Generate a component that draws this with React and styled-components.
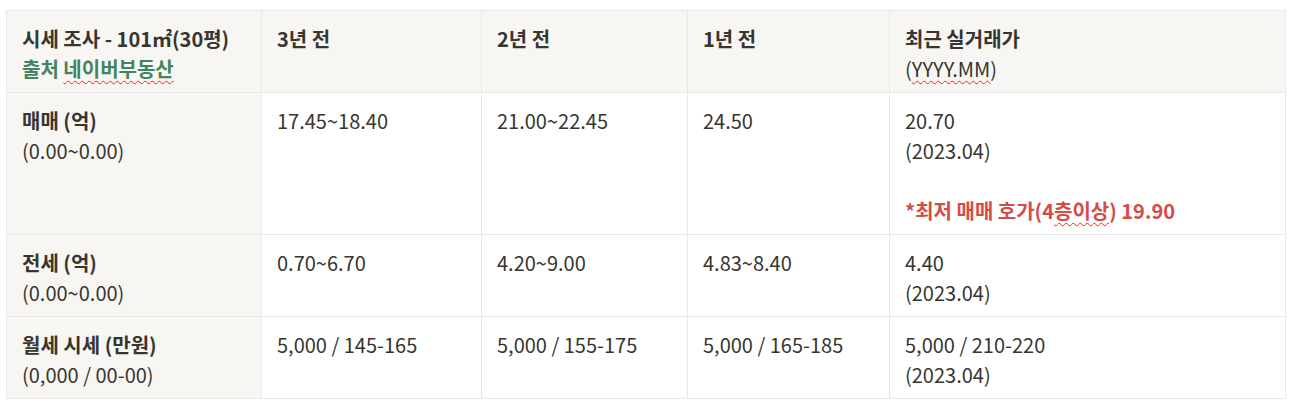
import React from "react";
import styled, { createGlobalStyle } from "styled-components";

const Global = createGlobalStyle`
  html, body { margin: 0; padding: 0; background: #ffffff; }
  body { font-family: "Noto Sans CJK KR", "Noto Sans", sans-serif; color: #37352f; }
`;

const Page = styled.div`
  padding: 10px 8px 0 6px;
`;

const Table = styled.table`
  border-collapse: collapse;
  table-layout: fixed;
  width: 1279px;
  font-size: 20px;
  line-height: 30px;
`;

const Cell = styled.td`
  border: 1px solid #e9e9e7;
  padding: 13px 16px 8px 15px;
  vertical-align: top;
  text-align: left;
  background: ${(p) => (p.$shaded ? "#f7f6f3" : "#ffffff")};
  font-weight: ${(p) => (p.$bold ? 700 : 400)};
  color: #37352f;
  white-space: nowrap;
`;

const Line = styled.div`
  font-weight: ${(p) => (p.$bold ? 700 : "inherit")};
  color: ${(p) => p.$color || "inherit"};
  height: 30px;
`;

const Squiggle = styled.span`
  text-decoration-line: underline;
  text-decoration-style: wavy;
  text-decoration-color: #ff2020;
  text-decoration-thickness: 1px;
  text-underline-offset: 3px;
`;

const widths = [255, 220, 206, 202, 396];

const rows = [
  {
    label: "매매 (억)",
    sub: "(0.00~0.00)",
    vals: ["17.45~18.40", "21.00~22.45", "24.50"],
    recent: ["20.70", "(2023.04)"],
    note: true,
  },
  {
    label: "전세 (억)",
    sub: "(0.00~0.00)",
    vals: ["0.70~6.70", "4.20~9.00", "4.83~8.40"],
    recent: ["4.40", "(2023.04)"],
  },
  {
    label: "월세 시세 (만원)",
    sub: "(0,000 / 00-00)",
    vals: ["5,000 / 145-165", "5,000 / 155-175", "5,000 / 165-185"],
    recent: ["5,000 / 210-220", "(2023.04)"],
  },
];

export default function App() {
  return (
    <Page>
      <Global />
      <Table>
        <colgroup>
          {widths.map((w, i) => (
            <col key={i} style={{ width: w }} />
          ))}
        </colgroup>
        <thead>
          <tr>
            <Cell as="th" $shaded $bold>
              <Line>시세 조사 - 101㎡(30평)</Line>
              <Line $color="#448361">
                출처 <Squiggle>네이버부동산</Squiggle>
              </Line>
            </Cell>
            <Cell as="th" $shaded $bold>3년 전</Cell>
            <Cell as="th" $shaded $bold>2년 전</Cell>
            <Cell as="th" $shaded $bold>1년 전</Cell>
            <Cell as="th" $shaded $bold>
              <Line>최근 실거래가</Line>
              <Line style={{ fontWeight: 400 }}>
                (<Squiggle>YYYY.MM</Squiggle>)
              </Line>
            </Cell>
          </tr>
        </thead>
        <tbody>
          {rows.map((r) => (
            <tr key={r.label}>
              <Cell $shaded>
                <Line $bold>{r.label}</Line>
                <Line>{r.sub}</Line>
              </Cell>
              {r.vals.map((v, i) => (
                <Cell key={i}>{v}</Cell>
              ))}
              <Cell>
                {r.recent.map((t) => (
                  <Line key={t}>{t}</Line>
                ))}
                {r.note && (
                  <>
                    <Line />
                    <Line $bold $color="#d44c47">
                      *최저 매매 호가(4<Squiggle>층이상</Squiggle>) 19.90
                    </Line>
                  </>
                )}
              </Cell>
            </tr>
          ))}
        </tbody>
      </Table>
    </Page>
  );
}
